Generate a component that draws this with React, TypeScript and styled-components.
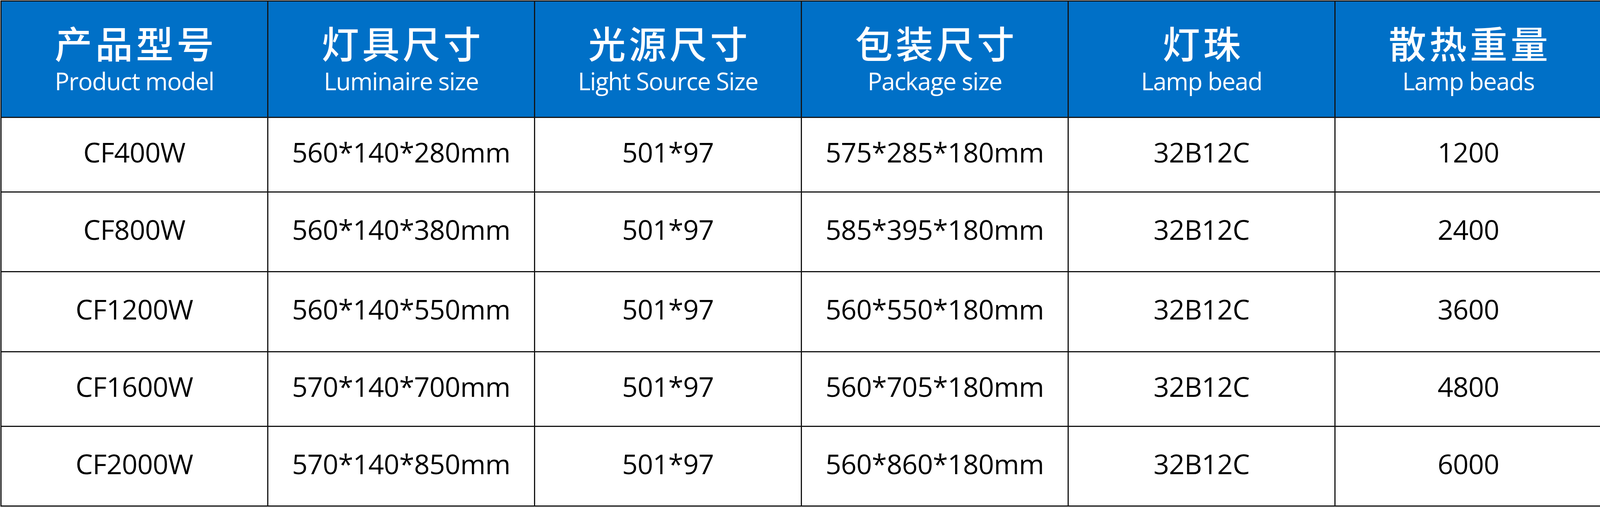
import React from "react";
import styled, { createGlobalStyle } from "styled-components";

const Global = createGlobalStyle`
  html, body { margin: 0; padding: 0; background: #ffffff; }
  body { font-family: "Open Sans", "Noto Sans CJK SC", sans-serif; }
`;

const Page = styled.div`
  width: 4102px;
  height: 1298px;
  padding: 1px 0 0 1px;
  box-sizing: border-box;
  background: #ffffff;
`;

const Table = styled.div`
  display: grid;
  grid-template-columns: repeat(6, 683px);
  grid-template-rows: 298px 191px 204px 205px 191px 204px;
  border-left: 3px solid #141414;
  border-top: 3px solid #141414;
  width: max-content;
`;

const HeadCell = styled.div`
  box-sizing: border-box;
  background: #0070c7;
  border-right: 3px solid #141414;
  border-bottom: 3px solid #141414;
  color: #ffffff;
  display: flex;
  flex-direction: column;
  align-items: center;
  justify-content: center;
  gap: 14px;
  padding-bottom: 4px;
`;

const HeadZh = styled.div`
  font-family: "Noto Sans CJK SC", sans-serif;
  font-size: 96px;
  line-height: 100px;
  letter-spacing: 8px;
  margin-right: -8px;
  font-weight: 500;
`;

const HeadEn = styled.div`
  font-family: "Open Sans", sans-serif;
  font-size: 62px;
  line-height: 70px;
  letter-spacing: -1.5px;
  font-weight: 500;
`;

const Cell = styled.div`
  box-sizing: border-box;
  border-right: 3px solid #141414;
  border-bottom: 3px solid #141414;
  display: flex;
  align-items: center;
  justify-content: center;
  padding-bottom: 14px;
  font-family: "Open Sans", sans-serif;
  font-size: 70px;
  line-height: 80px;
  letter-spacing: -0.6px;
  font-weight: 500;
  color: #000000;
`;

const headers = [
  ["产品型号", "Product model"],
  ["灯具尺寸", "Luminaire size"],
  ["光源尺寸", "Light Source Size"],
  ["包装尺寸", "Package size"],
  ["灯珠", "Lamp bead"],
  ["散热重量", "Lamp beads"],
];

const rows = [
  ["CF400W", "560*140*280mm", "501*97", "575*285*180mm", "32B12C", "1200"],
  ["CF800W", "560*140*380mm", "501*97", "585*395*180mm", "32B12C", "2400"],
  ["CF1200W", "560*140*550mm", "501*97", "560*550*180mm", "32B12C", "3600"],
  ["CF1600W", "570*140*700mm", "501*97", "560*705*180mm", "32B12C", "4800"],
  ["CF2000W", "570*140*850mm", "501*97", "560*860*180mm", "32B12C", "6000"],
];

export default function App() {
  return (
    <Page>
      <Global />
      <Table>
        {headers.map(([zh, en]) => (
          <HeadCell key={zh}>
            <HeadZh>{zh}</HeadZh>
            <HeadEn>{en}</HeadEn>
          </HeadCell>
        ))}
        {rows.map((r, i) =>
          r.map((v, j) => <Cell key={`${i}-${j}`}>{v}</Cell>)
        )}
      </Table>
    </Page>
  );
}
